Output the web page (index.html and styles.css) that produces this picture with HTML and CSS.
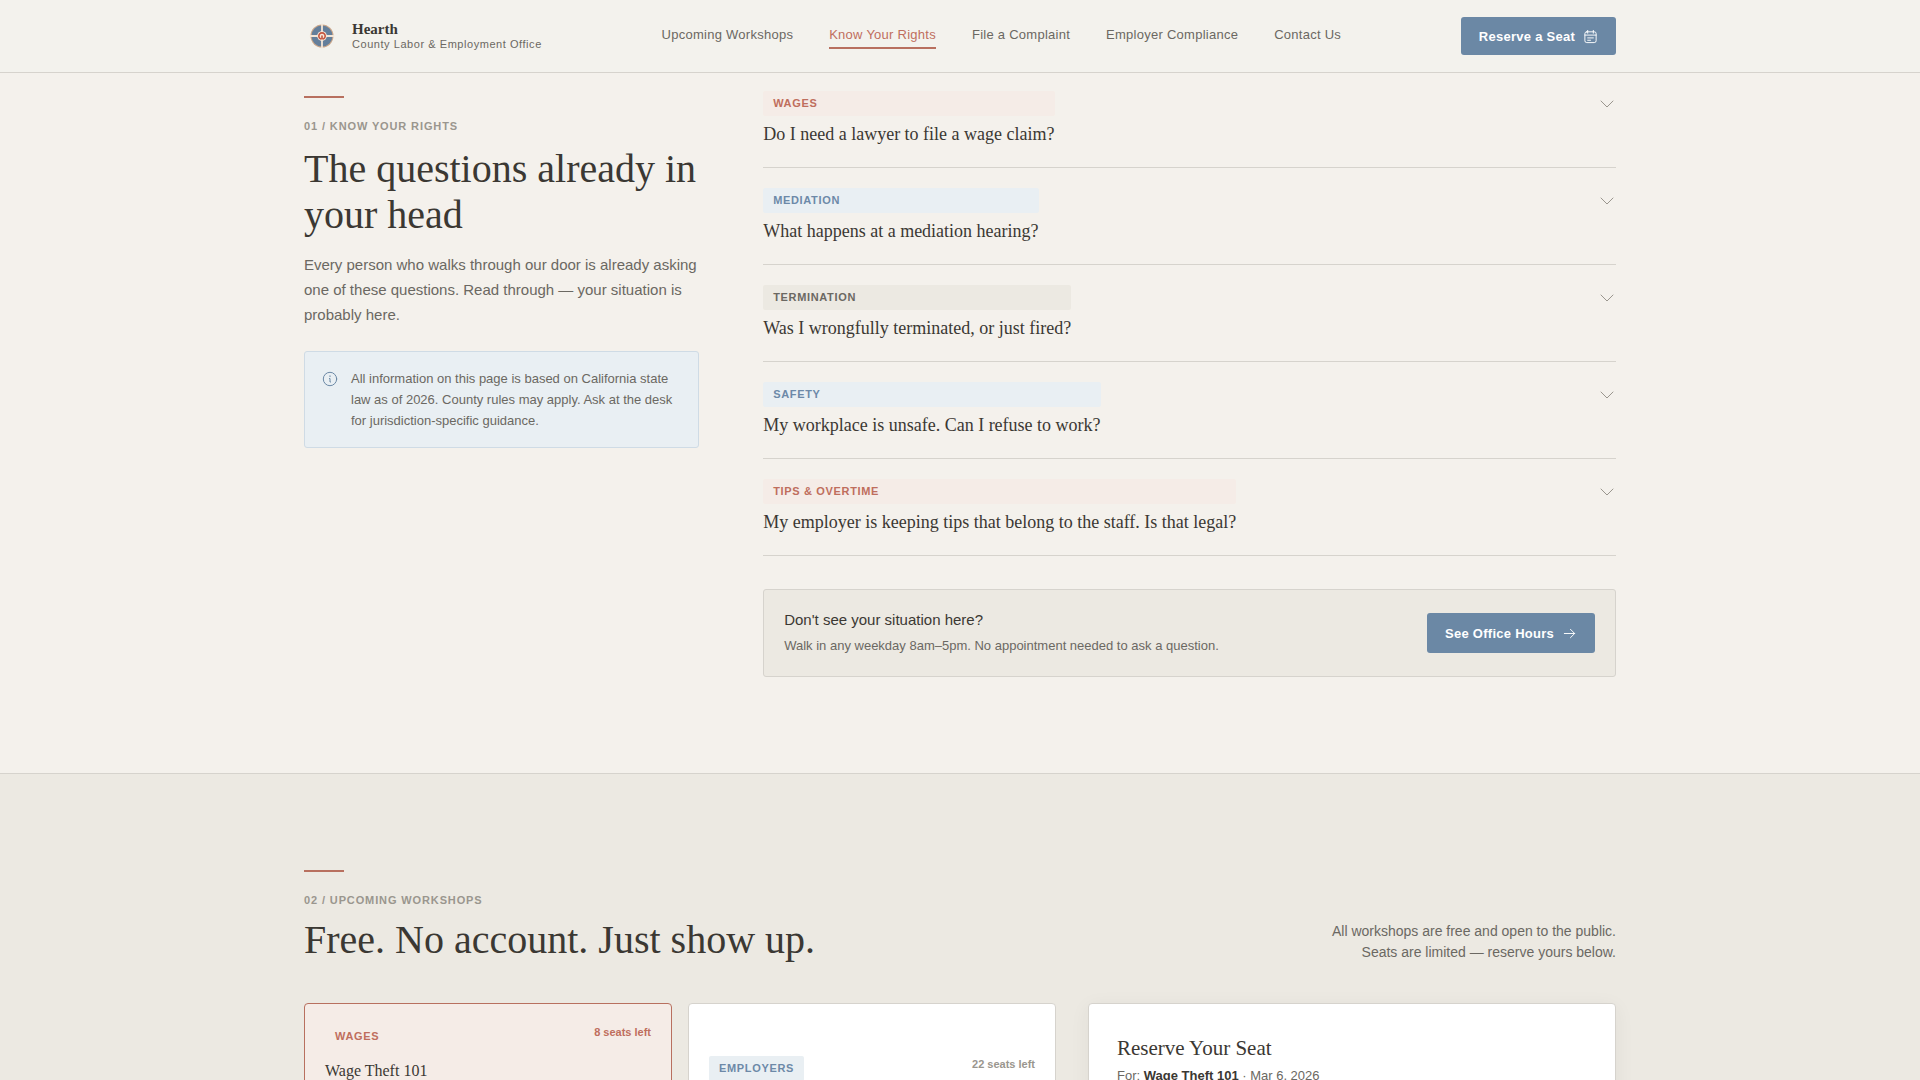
FILE: index.html
```html
<!DOCTYPE html>
<html lang="en">
<head>
<meta charset="utf-8">
<meta name="viewport" content="width=device-width, initial-scale=1">
<title>Hearth</title>
<link rel="stylesheet" href="styles.css">
</head>
<body>
<header class="site-header">
  <div class="container header-row">
    <a class="brand" href="#">
      <svg class="brand-mark" viewBox="0 0 36 36" aria-hidden="true">
        <circle cx="18" cy="18" r="11.500" fill="#c9a68a"/>
        <circle cx="18" cy="18" r="7.500" fill="none" stroke="#647f9b" stroke-width="6"/>
        <path d="M18 6.500v23M6.500 18h23" stroke="#f3e6d8" stroke-width="1.800"/>
        <circle cx="18" cy="18" r="4.800" fill="#f6e9dc"/>
        <path d="M16.400 20.800a3.200 3.200 0 1 1 3.200 0M18 18v3" fill="none" stroke="#c4553f" stroke-width="1.600"/>
      </svg>
      <span class="brand-text">
        <span class="brand-name">Hearth</span>
        <span class="brand-sub">County Labor &amp; Employment Office</span>
      </span>
    </a>
    <nav class="nav">
      <a class="nav-link" href="#workshops">Upcoming Workshops</a>
      <a class="nav-link is-active" href="#rights">Know Your Rights</a>
      <a class="nav-link" href="#complaint">File a Complaint</a>
      <a class="nav-link" href="#compliance">Employer Compliance</a>
      <a class="nav-link" href="#contact">Contact Us</a>
    </nav>
    <button class="btn btn-header" type="button">Reserve a Seat
      <svg class="icon-btn" viewBox="0 0 16 16" aria-hidden="true"><rect x="2" y="3" width="12" height="11.500" rx="2"/><path d="M2 6.500h12M5 1.500v3M11 1.500v3M5 9.500h6M5 12h3"/></svg>
    </button>
  </div>
</header>
<main>
  <section class="section rights" id="rights">
    <div class="container rights-grid">
      <div class="intro">
        <div class="rule"></div>
        <p class="eyebrow">01 / Know Your Rights</p>
        <h2 class="heading heading-rights">The questions already in your head</h2>
        <p class="lead">Every person who walks through our door is already asking one of these questions. Read through — your situation is probably here.</p>
        <aside class="note">
          <svg class="note-icon" viewBox="0 0 18 18" aria-hidden="true"><circle cx="9" cy="9" r="6.700"/><path d="M8.500 8.500H9v3.500h.5M9 5.800v.8"/></svg>
          <p class="note-text">All information on this page is based on California state law as of 2026. County rules may apply. Ask at the desk for jurisdiction-specific guidance.</p>
        </aside>
      </div>
      <div class="faq">
        <button class="faq-item" type="button" aria-expanded="false">
          <span class="faq-body"><span class="tag tag-clay">Wages</span><span class="faq-question">Do I need a lawyer to file a wage claim?</span></span>
          <svg class="caret" viewBox="0 0 18 18" aria-hidden="true"><path d="M3 6l6 6 6-6"/></svg>
        </button>
        <button class="faq-item" type="button" aria-expanded="false">
          <span class="faq-body"><span class="tag tag-blue">Mediation</span><span class="faq-question">What happens at a mediation hearing?</span></span>
          <svg class="caret" viewBox="0 0 18 18" aria-hidden="true"><path d="M3 6l6 6 6-6"/></svg>
        </button>
        <button class="faq-item" type="button" aria-expanded="false">
          <span class="faq-body"><span class="tag tag-stone">Termination</span><span class="faq-question">Was I wrongfully terminated, or just fired?</span></span>
          <svg class="caret" viewBox="0 0 18 18" aria-hidden="true"><path d="M3 6l6 6 6-6"/></svg>
        </button>
        <button class="faq-item" type="button" aria-expanded="false">
          <span class="faq-body"><span class="tag tag-blue">Safety</span><span class="faq-question">My workplace is unsafe. Can I refuse to work?</span></span>
          <svg class="caret" viewBox="0 0 18 18" aria-hidden="true"><path d="M3 6l6 6 6-6"/></svg>
        </button>
        <button class="faq-item" type="button" aria-expanded="false">
          <span class="faq-body"><span class="tag tag-clay">Tips &amp; Overtime</span><span class="faq-question">My employer is keeping tips that belong to the staff. Is that legal?</span></span>
          <svg class="caret" viewBox="0 0 18 18" aria-hidden="true"><path d="M3 6l6 6 6-6"/></svg>
        </button>
        <div class="help">
          <div>
            <p class="help-title">Don't see your situation here?</p>
            <p class="help-sub">Walk in any weekday 8am–5pm. No appointment needed to ask a question.</p>
          </div>
          <button class="btn btn-help" type="button">See Office Hours
            <svg class="icon-btn" viewBox="0 0 16 16" aria-hidden="true"><path d="M2.500 8h11M9 3.500L13.500 8 9 12.500"/></svg>
          </button>
        </div>
      </div>
    </div>
  </section>
  <section class="section workshops" id="workshops">
    <div class="container">
      <div class="rule"></div>
      <div class="workshops-head">
        <div>
          <p class="eyebrow">02 / Upcoming Workshops</p>
          <h2 class="heading">Free. No account. Just show up.</h2>
        </div>
        <p class="workshops-note">All workshops are free and open to the public.<br>Seats are limited — reserve yours below.</p>
      </div>
      <div class="workshops-grid">
        <div class="cards">
          <button class="card is-selected" type="button" aria-pressed="true">
            <span class="card-top"><span class="tag tag-clay">Wages</span><span class="seats seats-low">8 seats left</span></span>
            <span class="card-title">Wage Theft 101</span>
          </button>
          <button class="card card-short" type="button" aria-pressed="false">
            <span class="card-top"><span class="tag tag-blue">Employers</span><span class="seats">22 seats left</span></span>
          </button>
        </div>
        <div class="panel">
          <h3 class="panel-title">Reserve Your Seat</h3>
          <p class="panel-for">For: <strong>Wage Theft 101</strong> · Mar 6, 2026</p>
        </div>
      </div>
    </div>
  </section>
</main>
</body>
</html>
```
FILE: styles.css
```css
:root {
  --paper: #f4f1ec;
  --stone: #ece9e2;
  --line: #d6d3cd;
  --ink: #3b3833;
  --body: #6b6862;
  --muted: #9a968e;
  --clay: #b8705f;
  --clay-text: #bf6e5d;
  --clay-tint: #f5ece7;
  --blue: #6b88a5;
  --blue-text: #6d89a8;
  --blue-tint: #e9eff3;
  --sans: "Liberation Sans", Arial, sans-serif;
  --serif: "Liberation Serif", "Times New Roman", serif;
}

* { box-sizing: border-box; }

body {
  margin: 0;
  height: 100vh;
  overflow: hidden;
  display: flex;
  flex-direction: column;
  background: var(--paper);
  color: var(--ink);
  font-family: var(--sans);
}

main {
  display: flex;
  flex-direction: column;
  flex: 1;
  min-height: 0;
  overflow: hidden;
}

p, h2, h3 { margin: 0; font-weight: 400; }
a { color: inherit; text-decoration: none; }
button { font-family: inherit; cursor: pointer; }

svg {
  flex: none;
  fill: none;
  stroke: currentColor;
  stroke-linecap: round;
  stroke-linejoin: round;
}

.container {
  width: 100%;
  max-width: 1440px;
  margin: 0 auto;
  padding: 0 64px;
}

.section { flex: none; }

/* Header */
.site-header {
  flex: none;
  background: #f3f2ed;
  border-bottom: 1px solid var(--line);
}

.header-row {
  display: flex;
  align-items: center;
  justify-content: space-between;
  min-height: 72px;
}

.brand { display: flex; align-items: center; gap: 12px; }
.brand-mark { width: 36px; height: 36px; stroke: none; }
.brand-text { display: flex; flex-direction: column; }

.brand-name {
  font-family: var(--serif);
  font-size: 15px;
  line-height: 16px;
  font-weight: 700;
}

.brand-sub {
  font-size: 11px;
  line-height: 14px;
  letter-spacing: 0.05em;
  color: var(--body);
}

.nav { display: flex; gap: 36px; }

.nav-link {
  padding: 2px 0;
  border-bottom: 2px solid transparent;
  font-size: 13px;
  line-height: 20px;
  letter-spacing: 0.02em;
  color: var(--body);
}

.nav-link.is-active { color: var(--clay-text); border-color: var(--clay); }

.btn {
  display: inline-flex;
  align-items: center;
  gap: 8px;
  flex: none;
  border: 0;
  border-radius: 3px;
  background: var(--blue);
  color: #fff;
  font-size: 13px;
  font-weight: 700;
  letter-spacing: 0.02em;
}

.btn-header { height: 38px; padding: 0 18px; }
.btn-help { height: 40px; padding: 0 18px; }
.icon-btn { width: 15px; height: 15px; }

/* Shared section parts */
.rule { width: 40px; height: 2px; background: var(--clay); }

.eyebrow {
  margin-top: 20px;
  font-size: 11px;
  line-height: 16px;
  font-weight: 700;
  letter-spacing: 0.08em;
  text-transform: uppercase;
  color: var(--muted);
}

.heading {
  font-family: var(--serif);
  font-size: 40px;
  line-height: 46px;
}

.tag {
  padding: 4px 10px;
  border-radius: 2px;
  font-size: 11px;
  line-height: 17px;
  font-weight: 700;
  letter-spacing: 0.06em;
  text-transform: uppercase;
}

.tag-clay { background: var(--clay-tint); color: var(--clay-text); }
.tag-blue { background: var(--blue-tint); color: var(--blue-text); }
.tag-stone { background: var(--stone); color: var(--body); }

/* Know your rights */
.rights { padding-bottom: 96px; }

.rights-grid {
  display: grid;
  grid-template-columns: 19fr 41fr;
  gap: 64px;
}

.intro { padding-top: 23px; }
.heading-rights { margin-top: 12px; }

.lead {
  margin-top: 14px;
  font-size: 15px;
  line-height: 25px;
  color: var(--body);
}

.note {
  display: flex;
  gap: 12px;
  margin-top: 24px;
  padding: 16px;
  border: 1px solid #cfdbe5;
  border-radius: 3px;
  background: var(--blue-tint);
}

.note-icon { width: 18px; height: 18px; margin-top: 2px; color: var(--blue); }
.note-text { font-size: 13px; line-height: 21px; color: var(--body); }

.faq { display: flex; flex-direction: column; }

.faq-item {
  display: flex;
  align-items: flex-start;
  justify-content: space-between;
  padding: 20px 0;
  border: 0;
  border-bottom: 1px solid var(--line);
  background: none;
  color: inherit;
  text-align: left;
}

.faq-item:first-child { padding-top: 18px; }
.faq-body { display: flex; flex-direction: column; gap: 6px; }

.faq-question {
  font-family: var(--serif);
  font-size: 18px;
  line-height: 25px;
}

.caret { width: 18px; height: 18px; margin-top: 4px; color: var(--muted); }

.help {
  display: flex;
  align-items: center;
  justify-content: space-between;
  margin-top: 33px;
  padding: 20px;
  border: 1px solid var(--line);
  border-radius: 3px;
  background: var(--stone);
}

.help-title { font-size: 15px; line-height: 20px; }
.help-sub { margin-top: 6px; font-size: 13px; line-height: 20px; color: var(--body); }

/* Workshops */
.workshops {
  padding-top: 96px;
  border-top: 1px solid var(--line);
  background: var(--stone);
}

.workshops-head {
  display: flex;
  align-items: flex-end;
  justify-content: space-between;
}

.workshops .heading { margin-top: 9px; }

.workshops-note {
  font-size: 14px;
  line-height: 21px;
  text-align: right;
  color: var(--body);
}

.workshops-grid {
  display: grid;
  grid-template-columns: 47fr 33fr;
  gap: 32px;
  margin-top: 40px;
}

.cards { display: grid; grid-template-columns: 1fr 1fr; gap: 16px; }

.card {
  display: flex;
  flex-direction: column;
  min-height: 240px;
  padding: 20px;
  border: 1px solid var(--line);
  border-radius: 4px;
  background: #fff;
  color: inherit;
  text-align: left;
}

.card.is-selected { border-color: var(--clay); background: var(--clay-tint); }
.card-short { padding-top: 52px; }

.card-top {
  display: flex;
  align-items: flex-start;
  justify-content: space-between;
  width: 100%;
}

.seats { font-size: 11px; line-height: 17px; font-weight: 700; color: var(--muted); }
.seats-low { color: var(--clay-text); }

.card-title {
  margin-top: 12px;
  font-family: var(--serif);
  font-size: 16px;
  line-height: 20px;
}

.panel {
  padding: 28px;
  border: 1px solid var(--line);
  border-radius: 4px;
  background: #fff;
  box-shadow: 0 4px 20px rgba(58, 55, 51, 0.06);
}

.panel-title { font-family: var(--serif); font-size: 21px; line-height: 32px; }
.panel-for { margin-top: 2px; font-size: 13px; line-height: 20px; color: var(--body); }
.panel-for strong { color: var(--ink); }
```
